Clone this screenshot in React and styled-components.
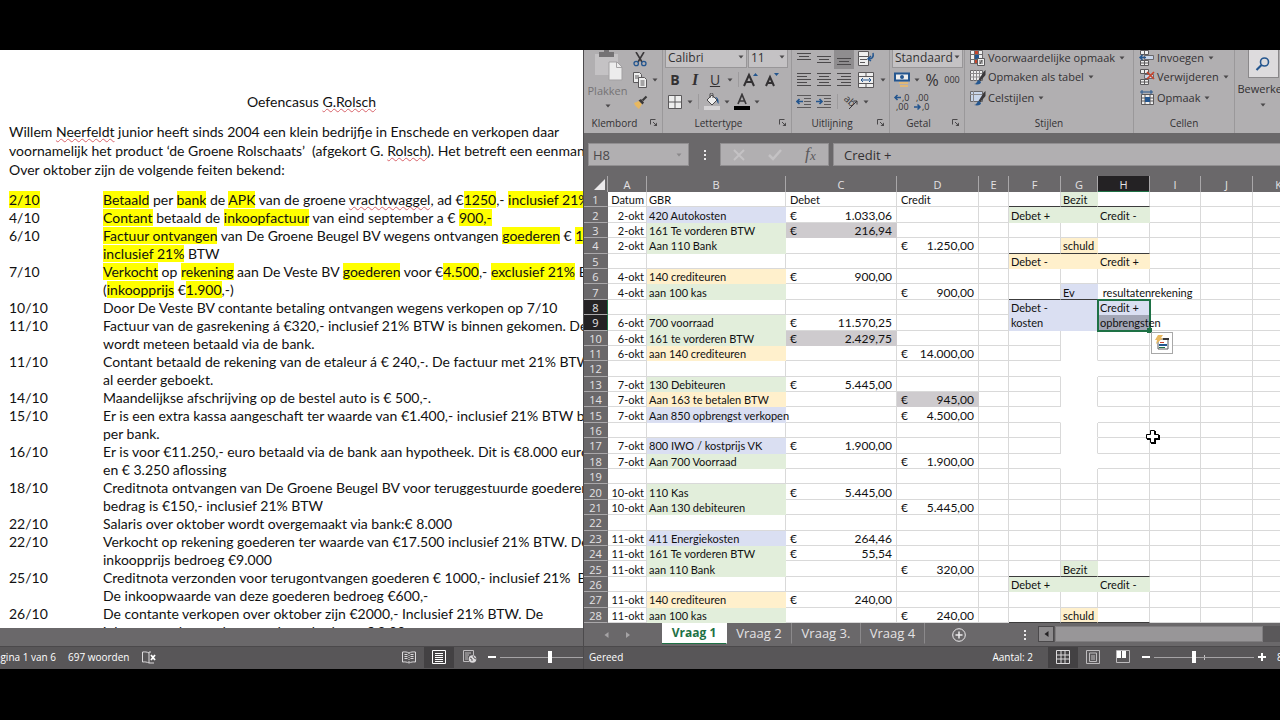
import React from 'react';
import styled, { createGlobalStyle } from 'styled-components';

const GlobalStyle = createGlobalStyle`
  * {
    box-sizing: border-box;
  }
  body {
    margin: 0;
    background: #000;
  }
  button, input, select {
    font: inherit;
    color: inherit;
    margin: 0;
  }
`;

const tones = {
  green: '#e2eedb',
  yellow: '#fff0cc',
  blue: '#dadff2',
  grey: '#cecbce',
};

const entries = {
  1: { date: 'Datum', account: 'GBR', debitHead: 'Debet', creditHead: 'Credit' },
  2: { date: '2-okt', account: '420 Autokosten', tone: 'blue', debit: '1.033,06' },
  3: { date: '2-okt', account: '161 Te vorderen BTW', tone: 'green', debit: '216,94', vat: true },
  4: { date: '2-okt', account: 'Aan 110 Bank', tone: 'green', credit: '1.250,00' },
  6: { date: '4-okt', account: '140 crediteuren', tone: 'yellow', debit: '900,00' },
  7: { date: '4-okt', account: 'aan 100 kas', tone: 'green', credit: '900,00' },
  9: { date: '6-okt', account: '700 voorraad', tone: 'green', debit: '11.570,25' },
  10: { date: '6-okt', account: '161 te vorderen BTW', tone: 'green', debit: '2.429,75', vat: true },
  11: { date: '6-okt', account: 'aan 140 crediteuren', tone: 'yellow', credit: '14.000,00' },
  13: { date: '7-okt', account: '130 Debiteuren', tone: 'green', debit: '5.445,00' },
  14: { date: '7-okt', account: 'Aan 163 te betalen BTW', tone: 'yellow', credit: '945,00', vat: true },
  15: { date: '7-okt', account: 'Aan 850 opbrengst verkopen', tone: 'blue', credit: '4.500,00' },
  17: { date: '7-okt', account: '800 IWO / kostprijs VK', tone: 'blue', debit: '1.900,00' },
  18: { date: '7-okt', account: 'Aan 700 Voorraad', tone: 'green', credit: '1.900,00' },
  20: { date: '10-okt', account: '110 Kas', tone: 'green', debit: '5.445,00' },
  21: { date: '10-okt', account: 'Aan 130 debiteuren', tone: 'green', credit: '5.445,00' },
  23: { date: '11-okt', account: '411 Energiekosten', tone: 'blue', debit: '264,46' },
  24: { date: '11-okt', account: '161 Te vorderen BTW', tone: 'green', debit: '55,54' },
  25: { date: '11-okt', account: 'aan 110 Bank', tone: 'green', credit: '320,00' },
  27: { date: '11-okt', account: '140 crediteuren', tone: 'yellow', debit: '240,00' },
  28: { date: '11-okt', account: 'aan 100 kas', tone: 'green', credit: '240,00' },
};

// the T-accounts in columns F, G and H
const schemes = {
  1: { mid: 'Bezit', tone: 'green', head: true },
  2: { left: 'Debet +', right: 'Credit -', tone: 'green' },
  4: { mid: 'schuld', tone: 'yellow', head: true },
  5: { left: 'Debet -', right: 'Credit +', tone: 'yellow' },
  7: { mid: 'Ev', tone: 'blue', head: true, right: '\u00a0resultatenrekening' },
  8: { left: 'Debet -', right: 'Credit +', tone: 'blue' },
  9: { left: 'kosten', right: 'opbrengsten', tone: 'blue' },
  25: { mid: 'Bezit', tone: 'green', head: true },
  26: { left: 'Debet +', right: 'Credit -', tone: 'green' },
  28: { mid: 'schuld', tone: 'yellow', head: true },
};

const rowNumbers = Array.from({ length: 28 }, (_, i) => i + 1);
const columns = ['A', 'B', 'C', 'D', 'E', 'F', 'G', 'H', 'I', 'J', 'K'];
const columnWidths = [24, 39, 139, 111, 82, 30, 52, 37, 52, 51, 52, 52];

const Desktop = styled.div`
  display: grid;
  grid-template-columns: minmax(0, 583fr) minmax(0, 697fr);
  height: 100vh;
  padding: 50px 0 51px;
  background: #000;
  overflow: hidden;
  font-family: 'Open Sans', 'Noto Sans', sans-serif;
  font-size: 12px;
  color: #333133;
`;

const Pane = styled.section`
  display: flex;
  flex-direction: column;
  min-width: 0;
  min-height: 0;
  overflow: hidden;
`;

const Workbook = styled(Pane)`
  border-left: 1px solid #4c4a4c;
  background: #6a686a;
`;

/* ---------- document ---------- */

const PageView = styled.main`
  flex: 1;
  min-height: 0;
  overflow: hidden;
  background: #fff;
`;

const Paper = styled.article`
  min-width: 623px;
  padding: 42px 9px 0;
  font-family: Lato, 'Liberation Sans', sans-serif;
  font-size: 14px;
  color: #111;
  white-space: nowrap;
`;

const Title = styled.h1`
  margin: 0 0 11px;
  font-size: 14px;
  font-weight: 400;
  line-height: 19px;
  text-align: center;
`;

const Intro = styled.p`
  margin: 0 0 12px;
  line-height: 19px;
`;

const Fact = styled.div`
  display: grid;
  grid-template-columns: 94px 1fr;
  line-height: 18px;
`;

const Mark = styled.mark`
  background: #ffff00;
  color: inherit;
`;

const Typo = styled.span`
  text-decoration: underline wavy #d8636a 1px;
  text-underline-offset: 1px;
  text-decoration-skip-ink: none;
`;

const ScrollStrip = styled.div`
  flex: none;
  height: 18px;
  background: #6a686a;
`;

const StatusBar = styled.footer`
  display: flex;
  align-items: center;
  flex: none;
  height: 23px;
  padding-bottom: 2px;
  border-top: 1px solid #4b494b;
  background: #585658;
  color: #fff;
  font-size: 10px;
  white-space: nowrap;
  overflow: hidden;
`;

const PageCount = styled.span`
  display: flex;
  flex: none;
  justify-content: flex-end;
  width: 56px;
  margin-right: 12px;
  overflow: hidden;
`;

const Spacer = styled.span`
  flex: 1;
`;

const StatusText = styled.span`
  padding: 0 ${(props) => props.$after || 0}px 0 ${(props) => props.$before || 0}px;
`;

const ViewButton = styled.button`
  display: flex;
  align-items: center;
  justify-content: center;
  flex: none;
  width: 30px;
  height: 22px;
  padding: 0;
  border: 0;
  background: ${(props) => (props.$on ? '#434143' : 'transparent')};
`;

const ZoomButton = styled.button`
  display: flex;
  align-items: center;
  justify-content: center;
  flex: none;
  width: 16px;
  height: 22px;
  padding: 0;
  border: 0;
  background: none;
`;

const Zoom = styled.input`
  appearance: none;
  flex: none;
  width: 100px;
  height: 12px;
  background: linear-gradient(#a5a3a5, #a5a3a5) center / 100% 1px no-repeat,
    linear-gradient(#c5c3c5, #c5c3c5) center / 1px 5px no-repeat;

  &::-webkit-slider-thumb {
    appearance: none;
    width: 4px;
    height: 12px;
    background: #fff;
  }
`;

const ZoomCut = styled.span`
  display: flex;
  flex: none;
  width: ${(props) => props.$width}px;
  overflow: hidden;
`;

/* ---------- ribbon ---------- */

const Ribbon = styled.header`
  display: flex;
  flex: none;
  height: 83px;
  background: #b1afb1;
  overflow: hidden;
`;

const Group = styled.div`
  display: flex;
  flex-direction: column;
  flex: none;
  width: ${(props) => props.$width}px;
  border-right: 1px solid #9a989a;
  white-space: nowrap;
`;

const Tools = styled.div`
  display: grid;
  grid-template-rows: ${(props) => (props.$list ? '16px 22px 20px' : '18px 23px 21px')};
  height: 64px;
  padding-left: ${(props) => props.$inset || 2}px;
`;

const ToolRow = styled.div`
  display: flex;
  align-items: center;
  min-width: 0;
`;

const Caption = styled.div`
  display: flex;
  align-items: center;
  justify-content: center;
  position: relative;
  height: 20px;
  padding-right: ${(props) => (props.$plain ? 0 : 17)}px;
  font-size: 10px;
`;

const Launcher = styled.button`
  position: absolute;
  right: 4px;
  top: 6px;
  display: flex;
  padding: 0;
  border: 0;
  background: none;
`;

const Tool = styled.button`
  display: flex;
  align-items: center;
  justify-content: center;
  flex: none;
  width: ${(props) => props.$width || 20}px;
  height: ${(props) => props.$height || 20}px;
  padding: 0;
  border: 0;
  background: ${(props) => (props.$on ? '#8f8d8f' : 'transparent')};
  font-family: ${(props) => (props.$italic ? "'Liberation Serif', serif" : 'inherit')};
  font-size: ${(props) => props.$size || 14}px;
  line-height: 18px;
  font-weight: ${(props) => (props.$bold ? 700 : 400)};
  font-style: ${(props) => (props.$italic ? 'italic' : 'normal')};
  text-decoration: ${(props) => (props.$under ? 'underline' : 'none')};
`;

const Command = styled.button`
  display: flex;
  align-items: center;
  gap: 2px;
  padding: 0;
  border: 0;
  background: none;
  font-size: 11px;
  line-height: 16px;
`;

const Divider = styled.span`
  flex: none;
  width: 1px;
  height: 15px;
  margin: 0 ${(props) => props.$gap || 3}px;
  background: #9d9b9d;
`;

const Picker = styled.span`
  display: grid;
  align-items: center;
  align-self: end;
  width: ${(props) => props.$width}px;
  height: 22px;
  margin-right: 1px;

  & > * {
    grid-area: 1 / 1;
  }
  & > svg {
    justify-self: end;
    margin-right: 1px;
    pointer-events: none;
  }
  select {
    appearance: none;
    width: 100%;
    height: 22px;
    padding: 0 2px;
    border: 1px solid #989698;
    border-radius: 0;
    background: #c4c2c4;
    font-size: 12px;
  }
`;

const Clipboard = styled.div`
  display: grid;
  grid-template-columns: 45px 1fr;
  height: 64px;
  padding-left: 1px;
`;

const PasteButton = styled.button`
  display: flex;
  flex-direction: column;
  align-items: center;
  justify-content: flex-start;
  padding: 0;
  border: 0;
  background: none;
  color: #757375;
  font-size: 11px;
  line-height: 20px;
`;

const ClipColumn = styled.div`
  display: grid;
  grid-template-rows: 18px 23px 21px;
`;

const FindButton = styled.button`
  display: flex;
  flex-direction: column;
  align-items: center;
  flex: none;
  width: 56px;
  padding: 0;
  border: 0;
  background: none;
  font-size: 11px;
  line-height: 22px;
`;

const FindFace = styled.span`
  display: flex;
  align-items: center;
  justify-content: center;
  width: 31px;
  height: 28px;
  border: 1px solid #8a888a;
  border-top: 0;
  background: #dddbdd;
`;

/* ---------- formula bar ---------- */

const FormulaBar = styled.div`
  display: flex;
  align-items: center;
  flex: none;
  height: 43px;
  padding-left: 4px;
  font-size: 13px;
`;

const NameBox = styled.span`
  display: grid;
  align-items: center;
  width: 101px;
  height: 23px;
  background: #b1afb1;

  & > * {
    grid-area: 1 / 1;
  }
  & > svg {
    justify-self: end;
    margin-right: 5px;
  }
  input {
    width: 100%;
    height: 23px;
    padding: 0 4px;
    border: 1px solid #918f91;
    background: none;
    color: #4b494b;
  }
`;

const FormulaTools = styled.div`
  display: flex;
  align-items: center;
  width: 109px;
  height: 23px;
  margin-right: 4px;
  border: 1px solid #918f91;
  background: #b1afb1;
`;

const FormulaInput = styled.input`
  flex: 1;
  min-width: 0;
  height: 23px;
  padding: 0 10px;
  border: 1px solid #918f91;
  border-right: 0;
  border-radius: 0;
  background: #b1afb1;
`;

/* ---------- sheet ---------- */

const SheetView = styled.div`
  position: relative;
  flex: 1;
  min-height: 0;
  overflow: hidden;
  background: #fff;
`;

const Sheet = styled.table`
  width: 721px;
  height: 100%;
  table-layout: fixed;
  border-collapse: separate;
  border-spacing: 0;
  font-family: Lato, 'Liberation Sans', sans-serif;
  font-size: 11px;
  line-height: 13px;
  color: #111;
  white-space: nowrap;
`;

const ColHead = styled.th`
  height: 16px;
  padding: 0;
  border-right: 1px solid #a9a7a9;
  background: ${(props) => (props.$on ? '#242224' : '#6a686a')};
  box-shadow: ${(props) => (props.$on ? 'inset 0 -1px #1e7145' : 'none')};
  color: #e4e2e4;
  font-family: 'Open Sans', sans-serif;
  font-size: 11px;
  font-weight: 400;
`;

const Corner = styled(ColHead)`
  text-align: right;
  vertical-align: bottom;

  svg {
    display: block;
    margin: 0 2px 2px auto;
  }
`;

const RowHead = styled.th`
  padding: 1px 0 0;
  border-right: 1px solid ${(props) => (props.$on ? '#1e7145' : '#6a686a')};
  border-bottom: 1px solid #a9a7a9;
  background: ${(props) => (props.$on ? '#242224' : '#6a686a')};
  color: #e4e2e4;
  font-family: 'Open Sans', sans-serif;
  font-size: 11px;
  font-weight: 400;
`;

const Cell = styled.td`
  padding: 1px 2px 0;
  border-right: 1px solid ${(props) => (props.$open ? 'transparent' : props.$fill ? tones[props.$fill] : '#d9d9d9')};
  border-bottom: 1px solid
    ${(props) => (props.$rule ? '#3c3c3c' : props.$blank ? 'transparent' : props.$fill ? tones[props.$fill] : '#d9d9d9')};
  background: ${(props) => (props.$fill ? tones[props.$fill] : 'transparent')};
  text-align: ${(props) => props.$align || 'left'};
`;

const Money = styled.div`
  display: flex;
  justify-content: space-between;
  padding: 0 2px;
  font-size: 12px;
`;

const HeadText = styled.span`
  padding-left: 2px;
`;

const Anchor = styled.div`
  position: relative;
`;

const Selection = styled.div`
  position: absolute;
  left: -3px;
  top: -2px;
  width: 54px;
  height: 33px;
  border: 2px solid #1e7145;
  background: linear-gradient(transparent 50%, rgba(60, 60, 70, 0.35) 50%);

  &::after {
    content: '';
    position: absolute;
    right: -3px;
    bottom: -3px;
    width: 5px;
    height: 5px;
    background: #1e7145;
  }
`;

const QuickAnalysis = styled.button`
  position: absolute;
  left: 51px;
  top: 16px;
  display: flex;
  align-items: center;
  justify-content: center;
  width: 22px;
  height: 22px;
  padding: 0;
  border: 1px solid #a8a8a8;
  background: #fff;
`;

const Pointer = styled.svg`
  position: absolute;
  left: 561px;
  top: 253px;
`;

const SheetBar = styled.nav`
  display: flex;
  flex: none;
  height: 23px;
  background: #6a686a;
  color: #e4e2e4;
`;

const Arrows = styled.div`
  display: flex;
  align-items: center;
  justify-content: center;
  gap: 17px;
  width: 78px;
  padding-right: 12px;
`;

const Tab = styled.button`
  width: ${(props) => props.$width}px;
  height: 21px;
  padding: 0;
  border: 0;
  border-right: 1px solid ${(props) => (props.$on ? '#fff' : '#8b898b')};
  border-bottom: 1px solid ${(props) => (props.$on ? '#1e7145' : 'transparent')};
  background: ${(props) => (props.$on ? '#fff' : 'transparent')};
  color: ${(props) => (props.$on ? '#1e7145' : 'inherit')};
  font-size: ${(props) => (props.$on ? 12 : 13)}px;
  line-height: 18px;
  font-weight: ${(props) => (props.$on ? 700 : 400)};
`;

const BarButton = styled.button`
  display: flex;
  align-items: center;
  justify-content: center;
  width: ${(props) => props.$width}px;
  padding: 0;
  border: 0;
  background: none;
`;

const ScrollBar = styled.div`
  display: flex;
  flex: 1;
  gap: 1px;
  height: 16px;
  margin: 3px 0 0 5px;
  background: #5a585a;
`;

const ScrollArrow = styled.button`
  display: flex;
  align-items: center;
  justify-content: center;
  width: 16px;
  padding: 0;
  border: 1px solid #4b494b;
  background: #8d8b8d;
`;

const ScrollThumb = styled.div`
  flex: 1;
  margin-right: 17px;
  border: 1px solid #807e80;
  background: #989698;
`;

/* ---------- icons ---------- */

const Caret = ({ color = '#4b494b' }) => (
  <svg width='10' height='10' viewBox='0 0 10 10'>
    <path d='M2.500 3.500h5L5 6.500z' fill={color} />
  </svg>
);

const LauncherIcon = () => (
  <svg width='8' height='8' viewBox='0 0 8 8' fill='none' stroke='#4b494b'>
    <path d='M.5 5.500v-5h5M3 3l3 3' />
    <path d='M7 3.500V7H3.500z' fill='#4b494b' stroke='none' />
  </svg>
);

const PasteIcon = () => (
  <svg width='30' height='31' viewBox='0 0 30 31'>
    <path d='M2 4h23v21H2z' fill='#c4c2c4' />
    <path d='M6 2h5V0h5v2h5v5H6z' fill='#757375' />
    <path d='M16 12h8l5 5v13H16z' fill='#ececec' stroke='#a3a1a3' />
    <path d='M23.500 12v5.500h5.500' fill='none' stroke='#a3a1a3' />
  </svg>
);

const CutIcon = () => (
  <svg width='14' height='15' viewBox='0 0 14 15' fill='none'>
    <path d='M3 0l6 10M11 0L5 10' stroke='#3a383a' strokeWidth='1.600' />
    <circle cx='3.200' cy='11.500' r='2.200' stroke='#24568f' strokeWidth='1.300' />
    <circle cx='10.800' cy='11.500' r='2.200' stroke='#24568f' strokeWidth='1.300' />
  </svg>
);

const CopyIcon = () => (
  <svg width='15' height='16' viewBox='0 0 15 16' fill='#eee' stroke='#5b595b'>
    <path d='M.5.500h6l2 2v8h-8z' />
    <path d='M2 4h4M2 6h4' />
    <path d='M5.500 5.500h6l2 2v8h-8z' />
    <path d='M7.500 9h4M7.500 11h4M7.500 13h4' />
  </svg>
);

const BrushIcon = () => (
  <svg width='15' height='14' viewBox='0 0 15 14'>
    <path d='M1 8l5-2 3 3-3 5C4 12 2 11 1 8z' fill='#e8b860' />
    <path d='M5.500 5.500l4 4 1.500-2L8 4z' fill='#3a383a' />
    <path d='M9.500 5.500l4-4' stroke='#3a383a' strokeWidth='2.200' />
  </svg>
);

const BordersIcon = () => (
  <svg width='14' height='14' viewBox='0 0 14 14'>
    <path d='M.5.500h13v13H.5z' fill='#eee' stroke='#5b595b' />
    <path d='M7 0v14M0 7h14' stroke='#5b595b' />
  </svg>
);

const BucketIcon = () => (
  <svg width='16' height='17' viewBox='0 0 16 17'>
    <path d='M3 7l5-5 5 5-5 5z' fill='#eee' stroke='#4b494b' />
    <path d='M6 5V1.500a1.500 1.500 0 0 1 3 0V5' fill='none' stroke='#4b494b' />
    <path d='M11 4c3 0 4 3 3.500 7-1-1-2-3-1.500-5z' fill='#24568f' />
    <path d='M0 13h16v4H0z' fill='#d5d3d5' />
  </svg>
);

const FontColorIcon = () => (
  <svg width='16' height='17' viewBox='0 0 16 17'>
    <path d='M4 11L8 1.500 12 11M5.500 8h5' fill='none' stroke='#3a383a' strokeWidth='1.700' />
    <path d='M0 13h16v4H0z' fill='#000' />
  </svg>
);

const SizeIcon = ({ down }) => (
  <svg width='18' height='17' viewBox='0 0 18 17'>
    <path
      d={down ? 'M3 15L7 6l4 9M4.500 12h5' : 'M1 15L6 4l5 11M3 11h6'}
      fill='none'
      stroke='#333133'
      strokeWidth='2'
    />
    <path d={down ? 'M11 2h5l-2.500 3z' : 'M10 5h5l-2.500-3z'} fill='#24568f' />
  </svg>
);

const LinesIcon = ({ lines }) => (
  <svg width='14' height='16' viewBox='0 0 14 16' stroke='#4b494b' fill='none'>
    {lines.map(([from, to, y]) => (
      <path key={y} d={`M${from} ${y}.5H${to}`} />
    ))}
  </svg>
);

const WrapIcon = () => (
  <svg width='17' height='16' viewBox='0 0 17 16'>
    <path d='M.5.500h10v5H.5zM.5 5.500h10v9H.5z' fill='#eee' stroke='#5b595b' />
    <path d='M2 8.500h7M2 11.500h5' stroke='#5b595b' />
    <path d='M15 2c1 4-1 6-4 6M13 5l-3 3 3 2' fill='none' stroke='#24568f' strokeWidth='1.500' />
  </svg>
);

const MergeIcon = () => (
  <svg width='16' height='16' viewBox='0 0 16 16'>
    <path d='M.5.500h15v15H.5z' fill='#eee' stroke='#5b595b' />
    <path d='M.5 4.500h15M.5 11.500h15M8 .5v4M8 11.500v4' stroke='#5b595b' />
    <path d='M3 8h10M5 6L3 8l2 2M11 6l2 2-2 2' fill='none' stroke='#24568f' />
  </svg>
);

const IndentIcon = ({ right }) => (
  <svg width='16' height='15' viewBox='0 0 16 15' fill='none'>
    <path d='M1 1.500h14M8 4.500h7M8 7.500h7M8 10.500h7M1 13.500h14' stroke='#5b595b' />
    <path d={right ? 'M0 7.500h6M3.500 5L6 7.500 3.500 10' : 'M7 7.500H1M3.500 5L1 7.500 3.500 10'} stroke='#24568f' strokeWidth='1.700' />
  </svg>
);

const OrientIcon = () => (
  <svg width='16' height='16' viewBox='0 0 16 16' fill='none' stroke='#3a383a'>
    <text x='0' y='10' transform='rotate(42 6 8)' fill='#3a383a' stroke='none' fontSize='10'>ab</text>
    <path d='M6 15l8-8M10.500 7H14v3.500' />
  </svg>
);

const MoneyIcon = () => (
  <svg width='17' height='16' viewBox='0 0 17 16'>
    <path d='M1 1.500h14v7H1z' fill='#eee' stroke='#24568f' strokeWidth='2' />
    <circle cx='8' cy='5' r='2' fill='#24568f' />
    <path d='M5 10h9v2H5zM6 13h8v2H6z' fill='#e0b878' />
  </svg>
);

const DecimalIcon = ({ less }) => (
  <svg width='18' height='18' viewBox='0 0 18 18' fontSize='9' fill='#333133'>
    <text x={less ? 3 : 9} y='8'>{less ? ',00' : ',0'}</text>
    <text x={less ? 9 : 3} y='17'>{less ? ',0' : ',00'}</text>
    <path
      d={less ? 'M1 14h6M4.500 11.500L7 14l-2.500 2.500' : 'M8 4.500H2M4.500 2L2 4.500 4.500 7'}
      fill='none'
      stroke='#24568f'
      strokeWidth='1.500'
    />
  </svg>
);

const CondIcon = () => (
  <svg width='16' height='16' viewBox='0 0 16 16'>
    <path d='M.5.500h12v13H.5z' fill='#eee' stroke='#6b696b' />
    <path d='M4.500 0v14M8.500 0v14M0 4.500h13M0 9.500h13' stroke='#6b696b' />
    <path d='M5 1h3v3H5zM5 10h2v3H5z' fill='#c8452c' />
    <path d='M5 5h4v4H5z' fill='#24568f' />
    <path d='M7.500 8.500h7v7h-7z' fill='#eee' stroke='#5b595b' />
    <path d='M9 11h4M9 13h4M12 10l-2 4' stroke='#3a383a' strokeWidth='.8' />
  </svg>
);

const TableStyleIcon = ({ solid }) => (
  <svg width='16' height='16' viewBox='0 0 16 16'>
    <path d='M.5 1.500h12v10H.5z' fill={solid ? '#c9d6ea' : '#eee'} stroke='#6b696b' />
    <path d={solid ? 'M3.500 1v11M0 4.500h13' : 'M3.500 1v11M6.500 1v11M9.500 1v11M0 4.500h13M0 8h13'} stroke='#8b898b' />
    <path d='M15.500 1v5l-5 6-2-1 5-8z' fill='#3a383a' />
    <path d='M4 15c3 0 3-4 5-4l2 2c0 2-3 3-7 2z' fill='#24568f' />
  </svg>
);

const CellsIcon = ({ kind }) => (
  <svg width='16' height='16' viewBox='0 0 16 16'>
    {kind === 'format' ? (
      <>
        <path d='M2.500 4.500h12v10h-12z' fill='#eee' stroke='#5b595b' />
        <path d='M2 8h13M2 11h13M6 4v11M11 4v11' stroke='#5b595b' />
        <path d='M6 7h5v5H6z' fill='#24568f' />
        <path d='M1 2h13M3 0v4M12 0v4' stroke='#24568f' />
      </>
    ) : (
      <>
        <path d='M1.500.500h8v4h-8zM1.500 10.500h8v5h-8z' fill='#eee' stroke='#5b595b' />
        <path d='M5.500 0v5M5.500 10v6M1 13h9' stroke='#5b595b' />
        <path d='M5.500 5.500h9v4h-9z' fill='#c9d6ea' stroke='#6b696b' />
        {kind === 'delete' ? (
          <path d='M8 3l7 7M15 3l-7 7' stroke='#c8452c' strokeWidth='1.700' />
        ) : (
          <path d='M7 7.500H1M3.500 5L1 7.500 3.500 10' fill='none' stroke='#24568f' strokeWidth='1.500' />
        )}
      </>
    )}
  </svg>
);

const BookIcon = ({ crossed }) => (
  <svg width='14' height='13' viewBox='0 0 14 13' fill='none' stroke='#dcdadc'>
    <path d={crossed ? 'M9 1H7v11M7 2C5 .8 3 .8.500 1v10c2.500-.3 4.500 0 6.500 1h5' : 'M7 2C5 .8 3 .8.500 1v10c2.500-.3 4.500 0 6.500 1 2-1 4-1.300 6.500-1V1C11 .8 9 .8 7 2z'} />
    {crossed ? (
      <path d='M9 4l4 5M13 4L9 9' stroke='#fff' strokeWidth='1.800' />
    ) : (
      <>
        <path d='M7 2v10' strokeDasharray='1 1' />
        <path d='M2.500 3.500h3M2.500 5.500h3M2.500 7.500h3M8.500 3.500h3M8.500 5.500h3M8.500 7.500h3' />
      </>
    )}
  </svg>
);

const PageIcon = () => (
  <svg width='14' height='14' viewBox='0 0 14 14' fill='none' stroke='#fff'>
    <path d='M.5.500h13v13H.5zM3 3.500h8M3 5.500h8M3 7.500h8M3 9.500h8M3 11.500h8' />
  </svg>
);

const WebIcon = () => (
  <svg width='15' height='14' viewBox='0 0 15 14' fill='none' stroke='#bdbbbd'>
    <path d='M7 11.500H1.500V.5h10V5M3 3h6M3 5h4M3 7h3M3 9h3' />
    <circle cx='10.500' cy='9' r='3.800' fill='#dcdadc' stroke='none' />
    <path d='M8 8l2 1v2M11 6l1 2 2 1' stroke='#585658' />
  </svg>
);

const GridIcon = () => (
  <svg width='14' height='14' viewBox='0 0 14 14' fill='none' stroke='#dcdadc'>
    <path d='M.5.500h13v13H.5zM5 0v14M9 0v14M0 5h14M0 9h14' />
  </svg>
);

const LayoutIcon = () => (
  <svg width='14' height='14' viewBox='0 0 14 14' fill='none' stroke='#bdbbbd'>
    <path d='M.5.500h13v13H.5zM3.500 3v8.500h7V3zM6 5v5M8 5v5' />
  </svg>
);

const BreakIcon = () => (
  <svg width='14' height='14' viewBox='0 0 14 14'>
    <path d='M.5.500h13v12H.5z' fill='none' stroke='#bdbbbd' />
    <path d='M1 1h4v7H1zM6 1h4v7H6z' fill='#fff' />
  </svg>
);

const SignIcon = ({ plus }) => (
  <svg width='10' height='10' viewBox='0 0 10 10' stroke='#fff' strokeWidth='2'>
    <path d={plus ? 'M1 5h8M5 1v8' : 'M1 5h8'} />
  </svg>
);

const DotsIcon = () => (
  <svg width='4' height='12' viewBox='0 0 4 12' fill='#eceaec'>
    <path d='M1 1h2v2H1zM1 5h2v2H1zM1 9h2v2H1z' />
  </svg>
);

const SideArrow = ({ right, color = '#a5a3a5' }) => (
  <svg width='5' height='8' viewBox='0 0 5 8'>
    <path d={right ? 'M0 1l4 3-4 3z' : 'M4.500 1v6L.5 4z'} fill={color} />
  </svg>
);

/* ---------- views ---------- */

const facts = [
  ['2/10', <><Mark>Betaald</Mark> per <Mark>bank</Mark> de <Mark>APK</Mark> van de groene <Typo>vrachtwaggel</Typo>, ad €<Mark>1250</Mark>,- <Mark>inclusief 21%</Mark> btw</>],
  ['4/10', <><Mark>Contant</Mark> betaald de <Mark>inkoopfactuur</Mark> van eind september a € <Mark>900,-</Mark></>],
  ['6/10', <><Mark>Factuur ontvangen</Mark> van De Groene Beugel BV wegens ontvangen <Mark>goederen</Mark> € <Mark>14.000</Mark></>],
  ['', <><Mark>inclusief 21%</Mark> BTW</>],
  ['7/10', <><Mark>Verkocht</Mark> op <Mark>rekening</Mark> aan De Veste BV <Mark>goederen</Mark> voor €<Mark>4.500</Mark>,- <Mark>exclusief 21%</Mark> BTW</>],
  ['', <>(<Mark>inkoopprijs</Mark> €<Mark>1.900</Mark>,-)</>],
  ['10/10', 'Door De Veste BV contante betaling ontvangen wegens verkopen op 7/10'],
  ['11/10', 'Factuur van de gasrekening á €320,- inclusief 21% BTW is binnen gekomen. Deze'],
  ['', 'wordt meteen betaald via de bank.'],
  ['11/10', 'Contant betaald de rekening van de etaleur á € 240,-. De factuur met 21% BTW was'],
  ['', 'al eerder geboekt.'],
  ['14/10', 'Maandelijkse afschrijving op de bestel auto is € 500,-.'],
  ['15/10', 'Er is een extra kassa aangeschaft ter waarde van €1.400,- inclusief 21% BTW betaald'],
  ['', 'per bank.'],
  ['16/10', 'Er is voor €11.250,- euro betaald via de bank aan hypotheek. Dit is €8.000 euro rente'],
  ['', 'en € 3.250 aflossing'],
  ['18/10', 'Creditnota ontvangen van De Groene Beugel BV voor teruggestuurde goederen. Het'],
  ['', 'bedrag is €150,- inclusief 21% BTW'],
  ['22/10', 'Salaris over oktober wordt overgemaakt via bank:€ 8.000'],
  ['22/10', 'Verkocht op rekening goederen ter waarde van €17.500 inclusief 21% BTW. De'],
  ['', 'inkoopprijs bedroeg €9.000'],
  ['25/10', <>Creditnota verzonden voor terugontvangen goederen € 1000,- inclusief 21%&nbsp; BTW.</>],
  ['', 'De inkoopwaarde van deze goederen bedroeg €600,-'],
  ['26/10', 'De contante verkopen over oktober zijn €2000,- Inclusief 21% BTW. De'],
  ['', 'inkoopwaarde van deze goederen bedroeg € 8.00'],
];

const Document = () => (
  <Pane>
    <PageView>
      <Paper>
        <Title>Oefencasus <Typo>G.Rolsch</Typo></Title>
        <Intro>
          Willem <Typo>Neerfeldt</Typo> junior heeft sinds 2004 een klein bedrijfje in Enschede en verkopen daar
          <br />
          voornamelijk het product ‘de Groene Rolschaats’&nbsp; (afgekort G. <Typo>Rolsch</Typo>). Het betreft een eenmanszaak
          <br />
          Over oktober zijn de volgende feiten bekend:
        </Intro>
        {facts.map(([day, text], i) => (
          <Fact key={i}>
            <span>{i === 0 ? <Mark>{day}</Mark> : day}</span>
            <span>{text}</span>
          </Fact>
        ))}
      </Paper>
    </PageView>
    <ScrollStrip />
    <StatusBar>
      <PageCount>Pagina 1 van 6</PageCount>
      <StatusText $after={13}>697 woorden</StatusText>
      <BookIcon crossed />
      <Spacer />
      <ViewButton aria-label='Leesmodus'><BookIcon /></ViewButton>
      <ViewButton $on aria-label='Afdrukweergave'><PageIcon /></ViewButton>
      <ViewButton aria-label='Webweergave'><WebIcon /></ViewButton>
      <ZoomButton aria-label='Uitzoomen'><SignIcon /></ZoomButton>
      <ZoomCut $width={83}>
        <Zoom type='range' aria-label='Zoomen document' defaultValue='50' />
      </ZoomCut>
    </StatusBar>
  </Pane>
);

const GroupCaption = ({ children, plain }) => (
  <Caption $plain={plain}>
    {children}
    {!plain && <Launcher aria-label={`${children} instellingen`}><LauncherIcon /></Launcher>}
  </Caption>
);

const full = [1, 4, 7, 10, 13].map((y, i) => [i % 2 ? 2 : 0, i % 2 ? 12 : 14, y]);

const RibbonBar = () => (
  <Ribbon>
    <Group $width={79}>
      <Clipboard>
        <PasteButton><PasteIcon />Plakken<Caret /></PasteButton>
        <ClipColumn>
          <ToolRow><Tool aria-label='Knippen'><CutIcon /></Tool></ToolRow>
          <ToolRow><Tool aria-label='Kopiëren'><CopyIcon /></Tool><Caret /></ToolRow>
          <ToolRow><Tool aria-label='Opmaak kopiëren'><BrushIcon /></Tool></ToolRow>
        </ClipColumn>
      </Clipboard>
      <GroupCaption>Klembord</GroupCaption>
    </Group>
    <Group $width={129}>
      <Tools>
        <ToolRow>
          <Picker $width={82}>
            <select aria-label='Lettertype'><option>Calibri</option></select>
            <Caret />
          </Picker>
          <Picker $width={40}>
            <select aria-label='Tekengrootte'><option>11</option></select>
            <Caret />
          </Picker>
        </ToolRow>
        <ToolRow>
          <Tool $bold>B</Tool>
          <Tool $italic $bold $size={16}>I</Tool>
          <Tool $under>U</Tool>
          <Caret />
          <Divider />
          <Tool aria-label='Groter'><SizeIcon /></Tool>
          <Tool aria-label='Kleiner'><SizeIcon down /></Tool>
        </ToolRow>
        <ToolRow>
          <Tool aria-label='Randen'><BordersIcon /></Tool>
          <Caret />
          <Divider />
          <Tool aria-label='Opvulkleur'><BucketIcon /></Tool>
          <Caret />
          <Tool aria-label='Tekstkleur'><FontColorIcon /></Tool>
          <Caret />
        </ToolRow>
      </Tools>
      <GroupCaption>Lettertype</GroupCaption>
    </Group>
    <Group $width={98}>
      <Tools>
        <ToolRow>
          <Tool aria-label='Boven uitlijnen'><LinesIcon lines={[[0, 14, 2], [2, 12, 5], [0, 14, 8]]} /></Tool>
          <Tool aria-label='Centreren verticaal'><LinesIcon lines={[[0, 14, 5], [2, 12, 8], [0, 14, 11]]} /></Tool>
          <Tool $on aria-label='Onder uitlijnen'><LinesIcon lines={[[0, 14, 7], [2, 12, 10], [0, 14, 13]]} /></Tool>
          <Tool $width={24} aria-label='Tekstterugloop'><WrapIcon /></Tool>
        </ToolRow>
        <ToolRow>
          <Tool aria-label='Links'><LinesIcon lines={full.map(([a, b, y]) => [0, a ? 10 : b, y])} /></Tool>
          <Tool aria-label='Centreren'><LinesIcon lines={full} /></Tool>
          <Tool aria-label='Rechts'><LinesIcon lines={full.map(([a, , y]) => [a ? 4 : 0, 14, y])} /></Tool>
          <Tool $width={24} aria-label='Samenvoegen'><MergeIcon /></Tool>
          <Caret />
        </ToolRow>
        <ToolRow>
          <Tool aria-label='Inspringing verkleinen'><IndentIcon /></Tool>
          <Tool aria-label='Inspringing vergroten'><IndentIcon right /></Tool>
          <Divider />
          <Tool aria-label='Afdrukstand'><OrientIcon /></Tool>
          <Caret />
        </ToolRow>
      </Tools>
      <GroupCaption>Uitlijning</GroupCaption>
    </Group>
    <Group $width={75}>
      <Tools>
        <ToolRow>
          <Picker $width={71}>
            <select aria-label='Getalnotatie'><option>Standaard</option></select>
            <Caret />
          </Picker>
        </ToolRow>
        <ToolRow>
          <Tool aria-label='Financieel'><MoneyIcon /></Tool>
          <Caret />
          <Tool $size={16}>%</Tool>
          <Tool $size={9}>000</Tool>
        </ToolRow>
        <ToolRow>
          <Tool aria-label='Meer decimalen'><DecimalIcon /></Tool>
          <Tool aria-label='Minder decimalen'><DecimalIcon less /></Tool>
        </ToolRow>
      </Tools>
      <GroupCaption>Getal</GroupCaption>
    </Group>
    <Group $width={169}>
      <Tools $list $inset={5}>
        <Command><CondIcon />Voorwaardelijke opmaak<Caret /></Command>
        <Command><TableStyleIcon />Opmaken als tabel<Caret /></Command>
        <Command><TableStyleIcon solid />Celstijlen<Caret /></Command>
      </Tools>
      <GroupCaption plain>Stijlen</GroupCaption>
    </Group>
    <Group $width={101}>
      <Tools $list $inset={5}>
        <Command><CellsIcon />Invoegen<Caret /></Command>
        <Command><CellsIcon kind='delete' />Verwijderen<Caret /></Command>
        <Command><CellsIcon kind='format' />Opmaak<Caret /></Command>
      </Tools>
      <GroupCaption plain>Cellen</GroupCaption>
    </Group>
    <FindButton>
      <FindFace>
        <svg width='16' height='16' viewBox='0 0 16 16' fill='none' stroke='#24568f'>
          <circle cx='9.500' cy='6' r='4' strokeWidth='1.600' />
          <path d='M6.500 9l-5 5' strokeWidth='2.200' />
        </svg>
      </FindFace>
      Bewerken
      <Caret />
    </FindButton>
  </Ribbon>
);

const SheetRow = ({ n }) => {
  const entry = entries[n] || {};
  const scheme = schemes[n] || {};
  const under = scheme.head;
  const fill = under ? undefined : scheme.tone;
  const blank = n > 9 && n < 19;
  const gap = n === 12 || n === 15 || n === 18;

  return (
    <tr>
      <RowHead $on={n === 8 || n === 9} scope='row'>{n}</RowHead>
      <Cell $align='right'>{entry.date}</Cell>
      <Cell $fill={entry.tone}>{entry.account}</Cell>
      <Cell $fill={entry.vat && entry.debit ? 'grey' : undefined}>
        {entry.debitHead && <HeadText>{entry.debitHead}</HeadText>}
        {entry.debit && <Money><span>€</span><span>{entry.debit}</span></Money>}
      </Cell>
      <Cell $fill={entry.vat && entry.credit ? 'grey' : undefined}>
        {entry.creditHead && <HeadText>{entry.creditHead}</HeadText>}
        {entry.credit && <Money><span>€</span><span>{entry.credit}</span></Money>}
      </Cell>
      <Cell />
      <Cell $fill={fill} $rule={under} $open={gap}>{scheme.left}</Cell>
      <Cell $fill={scheme.tone} $rule={under} $blank={blank} $open={gap}>{scheme.mid}</Cell>
      <Cell $fill={fill} $rule={under} $open={n === 7}>
        {n === 8 || n === 9 ? (
          <Anchor>
            {n === 8 && <Selection />}
            {scheme.right}
            {n === 9 && (
              <QuickAnalysis aria-label='Snelle analyse'>
                <svg width='16' height='16' viewBox='0 0 16 16'>
                  <path d='M4 4h10v10H4z' fill='#fff' stroke='#5b595b' />
                  <path d='M9 3h6v2H9z' fill='#3a383a' />
                  <path d='M6 7h4v1H6z' fill='#c8452c' />
                  <path d='M5 9h8v2H5z' fill='#24568f' />
                  <path d='M5 12h6v1H5z' fill='#1e7145' />
                  <path d='M4 0h5L7 3h2L2 9l1-4H1z' fill='#e8b860' />
                </svg>
              </QuickAnalysis>
            )}
          </Anchor>
        ) : (
          scheme.right
        )}
      </Cell>
      <Cell />
      <Cell />
      <Cell />
    </tr>
  );
};

const Spreadsheet = () => (
  <Workbook>
    <RibbonBar />
    <FormulaBar>
      <NameBox>
        <input aria-label='Naamvak' defaultValue='H8' />
        <Caret color='#8b898b' />
      </NameBox>
      <BarButton $width={31} aria-label='Formaat wijzigen'><DotsIcon /></BarButton>
      <FormulaTools>
        <Tool $width={35} aria-label='Annuleren'>
          <svg width='12' height='12' viewBox='0 0 12 12' stroke='#c4c2c4' strokeWidth='2'><path d='M1 1l10 10M11 1L1 11' /></svg>
        </Tool>
        <Tool $width={38} aria-label='Invoeren'>
          <svg width='14' height='12' viewBox='0 0 14 12' fill='none' stroke='#c4c2c4' strokeWidth='2.500'><path d='M1 6l4 4 8-9' /></svg>
        </Tool>
        <Tool $width={34} aria-label='Functie invoegen'>
          <svg width='16' height='18' viewBox='0 0 16 18' fill='#5b595b' fontFamily='Liberation Serif' fontStyle='italic'>
            <text x='2' y='13' fontSize='17'>f</text>
            <text x='7' y='14' fontSize='13'>x</text>
          </svg>
        </Tool>
      </FormulaTools>
      <FormulaInput aria-label='Formule' defaultValue='Credit +' />
    </FormulaBar>
    <SheetView>
      <Sheet>
        <colgroup>
          {columnWidths.map((width, i) => <col key={i} style={{ width }} />)}
        </colgroup>
        <thead>
          <tr>
            <Corner>
              <svg width='11' height='11' viewBox='0 0 11 11'><path d='M11 0v11H0z' fill='#eceaec' /></svg>
            </Corner>
            {columns.map((name) => <ColHead key={name} $on={name === 'H'} scope='col'>{name}</ColHead>)}
          </tr>
        </thead>
        <tbody>
          {rowNumbers.map((n) => <SheetRow key={n} n={n} />)}
        </tbody>
      </Sheet>
      <Pointer width='16' height='16' viewBox='0 0 16 16'>
        <path d='M6 2h5v4h4v5h-4v4H6v-4H2V6h4z' fill='#000' />
        <path d='M5.500 1.500h4v4h4v4h-4v4h-4v-4h-4v-4h4z' fill='#fff' stroke='#000' />
      </Pointer>
    </SheetView>
    <SheetBar>
      <Arrows><SideArrow /><SideArrow right /></Arrows>
      <Tab $on $width={65}>Vraag 1</Tab>
      <Tab $width={65}>Vraag 2</Tab>
      <Tab $width={69}>Vraag 3.</Tab>
      <Tab $width={64}>Vraag 4</Tab>
      <BarButton $width={68} aria-label='Nieuw blad'>
        <svg width='14' height='14' viewBox='0 0 14 14' fill='none' stroke='#eceaec'>
          <circle cx='7' cy='7' r='6.300' />
          <path d='M7 3.500v7M3.500 7h7' strokeWidth='1.500' />
        </svg>
      </BarButton>
      <Spacer />
      <BarButton $width={16} aria-label='Tabbladbalk'><DotsIcon /></BarButton>
      <ZoomCut $width={247}>
        <ScrollBar>
          <ScrollArrow aria-label='Naar links'><SideArrow color='#242224' /></ScrollArrow>
          <ScrollThumb />
        </ScrollBar>
      </ZoomCut>
    </SheetBar>
    <StatusBar>
      <StatusText $before={5}>Gereed</StatusText>
      <Spacer />
      <StatusText $after={15}>Aantal: 2</StatusText>
      <ViewButton $on aria-label='Normaal'><GridIcon /></ViewButton>
      <ViewButton aria-label='Pagina-indeling'><LayoutIcon /></ViewButton>
      <ViewButton aria-label='Pagina-eindevoorbeeld'><BreakIcon /></ViewButton>
      <ZoomButton aria-label='Uitzoomen'><SignIcon /></ZoomButton>
      <Zoom type='range' aria-label='Zoomen werkblad' defaultValue='40' />
      <ZoomButton aria-label='Inzoomen'><SignIcon plus /></ZoomButton>
      <ZoomCut $width={10}><StatusText $before={7}>85%</StatusText></ZoomCut>
    </StatusBar>
  </Workbook>
);

const App = () => (
  <>
    <GlobalStyle />
    <Desktop>
      <Document />
      <Spreadsheet />
    </Desktop>
  </>
);

export default App;
